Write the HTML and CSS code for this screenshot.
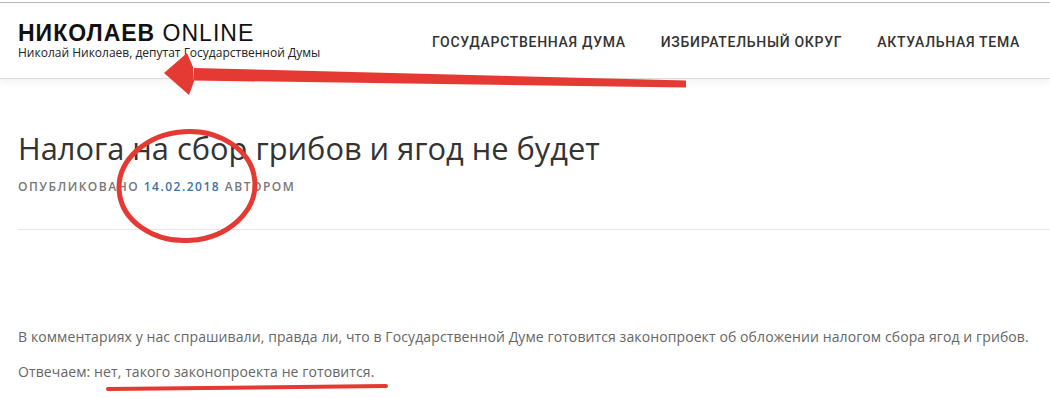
FILE: index.html
```html
<html>
<head>
    <link rel="stylesheet" href="styles.css">
</head>

<body>

<div class="page">
    <header class="site-header">
        <div class="branding">
            <div class="site-title"><b>НИКОЛАЕВ</b> ONLINE</div>
            <div class="site-description">Николай Николаев, депутат Государственной Думы</div>
        </div>
        <nav class="main-nav">
            <a href="#">Государственная Дума</a>
            <a href="#">Избирательный округ</a>
            <a href="#">Актуальная тема</a>
        </nav>
    </header>

    <article class="post">
        <h1 class="post-title">Налога на сбор грибов и ягод не будет</h1>
        <div class="post-meta">Опубликовано <a href="#">14.02.2018</a> автором</div>

        <div class="post-content">
            <p>В комментариях у нас спрашивали, правда ли, что в Государственной Думе готовится законопроект об обложении налогом сбора ягод и грибов.</p>
            <p>Отвечаем: нет, такого законопроекта не готовится.</p>
        </div>
    </article>

    <!-- red marks drawn over the screenshot -->
    <svg class="marks" width="1050" height="398" viewBox="0 0 1050 398">
        <polygon points="686,80.5 686,87.5 194,80.5 194,68" fill="#e53a33"/>
        <polygon points="164,73 187,53 193,67 194,81.5 189,95" fill="#e53a33"/>
        <ellipse cx="187" cy="186" rx="68" ry="54.5" fill="none" stroke="#e53a33" stroke-width="5" transform="rotate(-4 187 186)"/>
        <line x1="108" y1="389" x2="386" y2="386" stroke="#e53a33" stroke-width="4" stroke-linecap="round"/>
    </svg>
</div>

</body>
</html>
```

FILE: styles.css
```css
body {
    margin: 0;
    padding: 2px 0 0 0;
    background-color: #fff;
    font-family: "Open Sans", sans-serif;
    color: #333;
}

.page {
    position: relative;
    height: 396px;
    overflow: hidden;
    border-top: 1px solid #bbb;
}

.site-header {
    display: flex;
    justify-content: space-between;
    align-items: center;
    height: 75px;
    padding: 0 30px 0 18px;
    border-bottom: 1px solid #ddd;
    box-shadow: 0 3px 8px rgba(0, 0, 0, 0.06);
}

.site-title {
    font-family: "Liberation Sans", Arial, sans-serif;
    font-size: 23px;
    letter-spacing: 1px;
    color: #111;
    line-height: 25px;
}

.site-title b {
    font-weight: 700;
}

.site-description {
    font-family: "Open Sans", sans-serif;
    font-size: 12px;
    color: #222;
    line-height: 14px;
}

.main-nav {
    display: flex;
    gap: 35px;
    padding-top: 3px;
}

.main-nav a {
    font-family: Roboto, sans-serif;
    font-weight: 500;
    font-size: 14px;
    letter-spacing: 0.7px;
    text-transform: uppercase;
    color: #333;
    text-decoration: none;
}

.post {
    padding: 0 0 0 18px;
}

.post-title {
    font-family: "Open Sans", sans-serif;
    font-weight: 400;
    font-size: 30.8px;
    line-height: 40px;
    color: #333;
    margin: 49px 0 0 0;
}

.post-meta {
    font-size: 12px;
    font-weight: 600;
    letter-spacing: 1.5px;
    text-transform: uppercase;
    color: #777;
    margin-top: 10px;
    padding-bottom: 34px;
    border-bottom: 1px solid #e6e6e6;
}

.post-meta a {
    color: #3a74a8;
    text-decoration: none;
}

.post-content {
    padding-top: 96px;
}

.post-content p {
    font-size: 14px;
    letter-spacing: 0.1px;
    color: #666;
    margin: 0 0 13px 0;
    line-height: 22px;
}

.marks {
    position: absolute;
    left: 0;
    top: -3px;
}
```
